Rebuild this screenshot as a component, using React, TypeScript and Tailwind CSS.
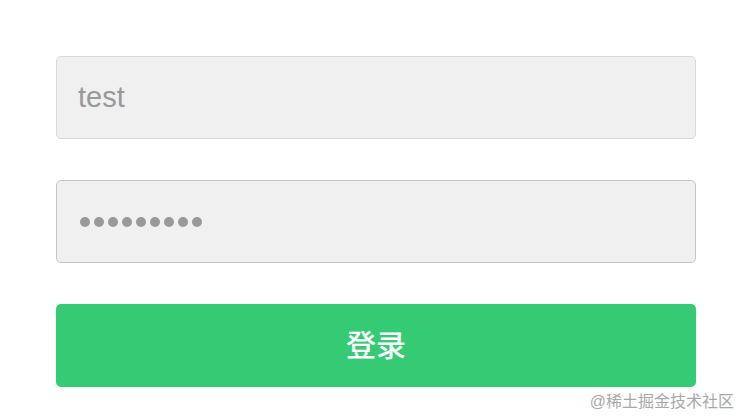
import { useState } from 'react'

const FONT = { fontFamily: '"Liberation Sans", "Noto Sans CJK SC", sans-serif' }

export default function App() {
  const [user, setUser] = useState('test')

  return (
    <div className="relative w-[748px] h-[420px] bg-white overflow-hidden" style={FONT}>
      <div className="flex flex-col gap-[41px] w-[640px] ml-[56px] pt-[56px]">
        {/* username */}
        <input
          value={user}
          onChange={(e) => setUser(e.target.value)}
          className="h-[83px] w-full px-[21px] rounded-[5px] border border-[#d9d9d9] bg-[#f0f0f0] text-[29px] text-[#999999] outline-none"
        />

        {/* password (drawn dots) */}
        <div className="h-[83px] w-full px-[23px] rounded-[5px] border border-[#c4c4c4] bg-[#f0f0f0] flex items-center gap-[4px]">
          {Array.from({ length: 9 }).map((_, i) => (
            <span key={i} className="w-[10px] h-[10px] rounded-full bg-[#999999]" />
          ))}
        </div>

        <button type="button" className="h-[83px] w-full rounded-[5px] bg-[#35cb74] text-white text-[30px] font-medium flex items-center justify-center">
          登录
        </button>
      </div>

      {/* watermark */}
      <span className="absolute right-[14px] bottom-[10px] text-[16px] leading-none text-[#a8a8a8]">@稀土掘金技术社区</span>
    </div>
  )
}
